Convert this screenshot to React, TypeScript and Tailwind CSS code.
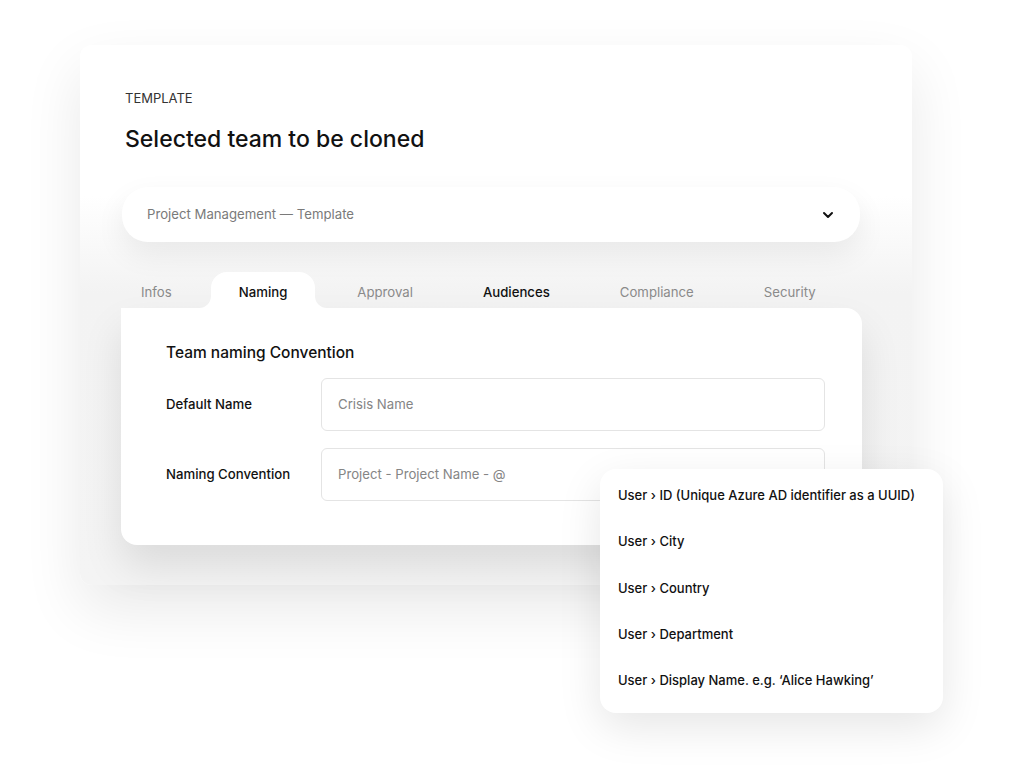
import { ChevronDown } from "lucide-react";

const tabs = ["Infos", "Naming", "Approval", "Audiences", "Compliance", "Security"];

const suggestions = [
  "User › ID (Unique Azure AD identifier as a UUID)",
  "User › City",
  "User › Country",
  "User › Department",
  "User › Display Name. e.g. ‘Alice Hawking’",
];

function Field({ label, placeholder }: { label: string; placeholder: string }) {
  return (
    <div className="flex items-center">
      <span className="w-[155px] shrink-0 text-[13.2px] font-medium text-[#111]">{label}</span>
      <div className="flex-1 h-[53px] rounded-md border border-[#e4e4e4] bg-white flex items-center px-4">
        <span className="text-[13.2px] text-[#858585]">{placeholder}</span>
      </div>
    </div>
  );
}

export default function App() {
  const active = "Naming";

  return (
    <div className="relative w-[1024px] h-[782px] bg-white overflow-hidden font-['Inter',sans-serif]">
      {/* main card */}
      <div className="ml-[80px] mt-[45px] w-[832px] h-[540px] rounded-xl bg-[linear-gradient(to_bottom,#ffffff_0%,#ffffff_28%,#f3f3f3_46%,#f4f4f4_100%)] shadow-[0_24px_60px_rgba(0,0,0,0.09)] pt-[45px] px-[41px]">
        <p className="ml-[4px] text-[13px] leading-4 text-[#333]">TEMPLATE</p>
        <h1 className="ml-[4px] mt-[19px] text-[23px] leading-7 font-medium text-[#111]">
          Selected team to be cloned
        </h1>

        <div className="mt-[34px] w-[738px] h-[55px] ml-[1px] rounded-[26px] bg-white shadow-[0_12px_30px_rgba(0,0,0,0.07)] flex items-center justify-between pl-[25px] pr-[24px]">
          <span className="text-[13.2px] text-[#7a7a7a]">Project Management — Template</span>
          <ChevronDown className="w-4 h-4 text-[#111]" strokeWidth={3} />
        </div>

        <div className="mt-[30px] flex items-end h-[36px] pl-[1px]">
          {tabs.map((t) => {
            const isActive = t === active;
            const first = t === "Infos";
            return (
              <div
                key={t}
                className={
                  "relative h-[36px] flex items-center pt-[6px] text-[13.2px] " +
                  (first ? "px-[19px] mr-[20px] " : "px-7 mr-[14px] ") +
                  (isActive
                    ? "bg-white rounded-t-2xl font-medium text-[#111]"
                    : t === "Audiences"
                    ? "font-medium text-[#111]"
                    : "text-[#8a8a8a]")
                }
              >
                {isActive && (
                  <>
                    <span className="absolute -left-3 bottom-0 w-3 h-3 rounded-br-xl shadow-[5px_5px_0_5px_#fff]" />
                    <span className="absolute -right-3 bottom-0 w-3 h-3 rounded-bl-xl shadow-[-5px_5px_0_5px_#fff]" />
                  </>
                )}
                {t}
              </div>
            );
          })}
        </div>

        <div className="w-[741px] rounded-b-2xl rounded-tr-2xl bg-white shadow-[0_22px_40px_rgba(0,0,0,0.1)] pt-[35px] pl-[45px] pr-[37px] pb-[44px]">
          <h2 className="text-[15.5px] leading-5 font-medium text-[#111]">Team naming Convention</h2>
          <div className="mt-[15px] flex flex-col gap-[17px]">
            <Field label="Default Name" placeholder="Crisis Name" />
            <Field label="Naming Convention" placeholder="Project - Project Name - @" />
          </div>
        </div>
      </div>

      {/* suggestions menu */}
      <div className="absolute left-[600px] top-[469px] w-[343px] h-[244px] rounded-2xl bg-white shadow-[0_14px_44px_rgba(0,0,0,0.1)] pt-[17px] pl-[18px]">
        <ul className="flex flex-col">
          {suggestions.map((s) => (
            <li key={s} className="h-[46.3px] leading-[18px] text-[13px] font-medium text-[#111]">
              {s}
            </li>
          ))}
        </ul>
      </div>
    </div>
  );
}
